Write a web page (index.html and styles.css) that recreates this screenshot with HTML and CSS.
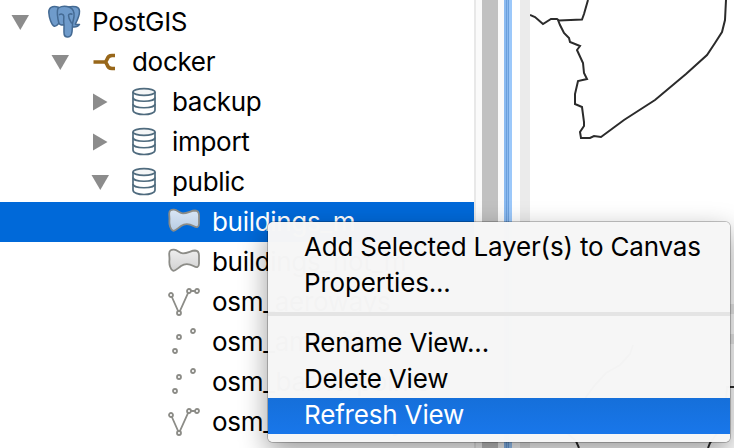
FILE: index.html
```html
<!DOCTYPE html>
<html lang="en">
<head>
    <meta charset="UTF-8">
    <title>PostGIS Browser</title>
    <link rel="stylesheet" href="styles.css">
</head>
<body>
    <svg class="symbols" width="0" height="0">
        <defs>
            <linearGradient id="polyFill" x1="0" y1="0" x2="0" y2="1">
                <stop offset="0" stop-color="#eeeeee"/>
                <stop offset="1" stop-color="#d2d2d2"/>
            </linearGradient>
            <linearGradient id="polyFillSelected" x1="0" y1="0" x2="0" y2="1">
                <stop offset="0" stop-color="#d9e6f5"/>
                <stop offset="1" stop-color="#b8cce3"/>
            </linearGradient>
        </defs>
        <symbol id="schema" viewBox="0 0 32 32">
            <g fill="#fff" stroke="#4f6b7e" stroke-width="1.7">
                <path d="M5 6v18c0 6 22 6 22 0V6"/>
                <ellipse cx="16" cy="6" rx="11" ry="3.4" fill="#f4f6f7"/>
                <path d="M5 11.5c0 5 22 5 22 0M5 18c0 5 22 5 22 0" fill="none"/>
            </g>
        </symbol>
        <symbol id="polygon" viewBox="0 0 32 32">
            <path transform="translate(0 .5)" d="M1.200 7C1.300 4 3 3 6 3.200C10 3.500 11 6.800 15 6.800C20 6.800 23 4 27 4C30.500 4.200 31 6 31 9V17C31 21 29 21.500 25.500 19.500C20 16.500 16.500 17 13 19.500C9 22.500 7 25 5 24.200C2.500 23.200 1 18 1.400 14C1.700 11 1.100 9 1.200 7Z" stroke="#8c8c87" stroke-width="1.8"/>
        </symbol>
        <symbol id="line" viewBox="0 0 32 32">
            <g fill="#fff" stroke="#8c8c87" stroke-width="1.8">
                <path d="M3 9 11 27 21 5H29" fill="none"/>
                <circle cx="3" cy="9" r="2"/><circle cx="11" cy="27" r="2"/>
                <circle cx="21" cy="5" r="2"/><circle cx="29" cy="5" r="2"/>
            </g>
        </symbol>
        <symbol id="point" viewBox="0 0 32 32">
            <g fill="#fff" stroke="#8c8c87" stroke-width="1.8">
                <circle cx="7" cy="25" r="2"/><circle cx="11" cy="11" r="2"/><circle cx="25" cy="5" r="2"/>
            </g>
        </symbol>
    </svg>

    <div class="window">
        <ul class="tree">
            <li class="level-0">
                <svg class="arrow" viewBox="0 0 20 20"><path d="M1.500 3h17.500L10.300 18z"/></svg>
                <svg class="icon" viewBox="0 0 32 32">
                    <g fill="#6f9bcb" stroke="#446a93" stroke-width="1.500" stroke-linejoin="round">
                        <path d="M10.500 1.200C4-1 .5 2 .8 6.500c.3 5 2.500 12.500 5.500 13.800 1.700.5 3.500-1.800 4.500-3z"/>
                        <path d="M20 1c6-1.300 11.300-.5 11.500 4 .2 4-2 9-4.200 13.200 1.700.7 3 .2 4.200.2-1.500 2.500-4.500 3-7.500 2.500z"/>
                        <path d="M10.500 1.800c3-1.600 8-1.600 11-.6 3.500 1.500 5 5.500 4.500 9.500-.4 3-1.300 5-1.500 7.500-.3 3.500 0 7.500-1 10-1.200 3.500-6.700 3.700-7.300.3-.6-3.500 0-6.500-.2-10-2.200 1-4.700.3-5.200-1.700-1-3.500-2.500-12.500-.3-15z"/>
                        <path d="M11 9c2-1.500 4.500-1 4.800 1 .2 3-.6 5 .2 8M24.500 8.500c-1.500-1.200-4-.5-4 1 0 3 1.500 5 3.300 8" fill="none"/>
                    </g>
                </svg>
                <span>PostGIS</span>
            </li>
            <li class="level-1">
                <svg class="arrow" viewBox="0 0 20 20"><path d="M1.500 3h17.500L10.300 18z"/></svg>
                <svg class="icon" viewBox="0 0 32 32">
                    <path d="M5.500 16H18M27 9.500h-3c-3.500 0-4.500 2-5 4l-1.500 2.500 1.500 2.500c.5 2 1.500 4 5 4H27" fill="none" stroke="#98671a" stroke-width="3.500"/>
                </svg>
                <span>docker</span>
            </li>
            <li class="level-2">
                <svg class="arrow" viewBox="0 0 20 20"><path d="M3 1.500v17L17.500 10z"/></svg>
                <svg class="icon"><use href="#schema"/></svg>
                <span>backup</span>
            </li>
            <li class="level-2">
                <svg class="arrow" viewBox="0 0 20 20"><path d="M3 1.500v17L17.500 10z"/></svg>
                <svg class="icon"><use href="#schema"/></svg>
                <span>import</span>
            </li>
            <li class="level-2">
                <svg class="arrow" viewBox="0 0 20 20"><path d="M1.500 3h17.500L10.300 18z"/></svg>
                <svg class="icon"><use href="#schema"/></svg>
                <span>public</span>
            </li>
            <li class="level-3 selected">
                <svg class="icon"><use href="#polygon"/></svg>
                <span>buildings_m</span>
            </li>
            <li class="level-3">
                <svg class="icon"><use href="#polygon"/></svg>
                <span>buildings_not_m</span>
            </li>
            <li class="level-3">
                <svg class="icon"><use href="#line"/></svg>
                <span>osm_aeroways</span>
            </li>
            <li class="level-3">
                <svg class="icon"><use href="#point"/></svg>
                <span>osm_amenities</span>
            </li>
            <li class="level-3">
                <svg class="icon"><use href="#point"/></svg>
                <span>osm_barrierpoints</span>
            </li>
            <li class="level-3">
                <svg class="icon"><use href="#line"/></svg>
                <span>osm_barrierways</span>
            </li>
        </ul>

        <div class="scrollbar"><div class="thumb"></div></div>
        <div class="splitter"></div>

        <div class="canvas">
            <svg viewBox="530 0 204 448">
                <g class="borders">
                    <path d="M530 15L535 17L543 24L551 19L557 19L559 20.500L582 19.500L584 14L588 0"/>
                    <path d="M558 20L560 25L564 33L569 38L570 42L580 46L577 50L583 63L584 73L587 79L578 81L575 94L575 104L582 107L584 122L584 126L580 132L581 138L590 138L594 136L601 137L624 120L655 100L686 74L707 55L715 43L722 32L725 20L726 0"/>
                    <path d="M633 345L630 354L620 365L606 373L595 385L586 397L583 412L561 414L558 420L566 432L576 441L579 448"/>
                    <path d="M734 387H727L725 412L718 432L710 443L708 448"/>
                    <path d="M530 410L536 414L543 420L550 415L558 414"/>
                </g>
                <path class="bands" d="M720 309h14M720 339h14"/>
            </svg>
        </div>
    </div>

    <div class="menu">
        <div class="item">Add Selected Layer(s) to Canvas</div>
        <div class="item">Properties...</div>
        <div class="separator"></div>
        <div class="item">Rename View...</div>
        <div class="item">Delete View</div>
        <div class="item active">Refresh View</div>
    </div>
</body>
</html>
```
FILE: styles.css
```css
/* General Styles */
body {
    margin: 0;
    font-family: 'Inter', sans-serif;
    font-size: 26px;
    color: #000;
    background-color: #fff;
    overflow: hidden;
}

.symbols {
    position: absolute;
}

.window {
    display: flex;
    width: 734px;
    height: 448px;
    overflow: hidden;
}

/* Browser tree */
.tree {
    width: 474px;
    margin: 0;
    padding: 2px 0 0;
    list-style: none;
    flex-shrink: 0;
}

.tree li {
    display: flex;
    align-items: center;
    height: 40px;
    white-space: nowrap;
    letter-spacing: -0.3px;
}

.tree span {
    padding-bottom: 2px;
}

.tree .level-0 {
    padding-left: 10px;
}

.tree .level-1 {
    padding-left: 50px;
}

.tree .level-2 {
    padding-left: 90px;
}

.tree .level-3 {
    padding-left: 168px;
}

.tree .selected {
    background-color: #0069d9;
    color: #fff;
}

.arrow {
    width: 20px;
    height: 20px;
    margin-right: 18px;
    fill: #8c8c8c;
}

.icon {
    width: 32px;
    height: 32px;
    margin-right: 12px;
    fill: url(#polyFill);
    overflow: visible;
}

.selected .icon {
    fill: url(#polyFillSelected);
}

.scrollbar {
    width: 16px;
    padding: 0 6px;
    background-color: #fafafa;
    border-left: 2px solid #e8e8e8;
}

.thumb {
    height: 100%;
    background-color: #c1c1c1;
}

.splitter {
    width: 8px;
    background: linear-gradient(to right, #8bbaf0 0 2px, #6b9fdb 2px 3px, #8bbaf0 3px 4px, #6b9fdb 4px 5px, #9cc8fa 5px);
}

.canvas {
    width: 204px;
    margin-left: 8px;
    border-left: 10px solid #ebebeb;
}

.canvas svg {
    display: block;
    width: 204px;
    height: 448px;
}

.borders {
    fill: none;
    stroke: #2b2b2b;
    stroke-width: 2;
}

.bands {
    stroke: #ebebeb;
    stroke-width: 10;
}

/* Context menu */
.menu {
    position: absolute;
    left: 268px;
    top: 222px;
    width: 462px;
    height: 212px;
    padding: 8px 0 0;
    border-radius: 5px;
    background-color: rgba(246, 246, 246, 0.988);
    box-shadow: 0 0 0 1px rgba(0, 0, 0, 0.22), 0 10px 28px rgba(0, 0, 0, 0.4);
}

.item {
    height: 36px;
    padding-left: 36px;
    line-height: 33px;
    letter-spacing: -0.18px;
    white-space: nowrap;
}

.item.active {
    background: linear-gradient(rgba(14, 107, 217, 0.97), rgba(20, 116, 234, 0.98));
    color: #fff;
}

.separator {
    height: 4px;
    margin: 10px 0;
    background-color: #e4e4e4;
}
```
